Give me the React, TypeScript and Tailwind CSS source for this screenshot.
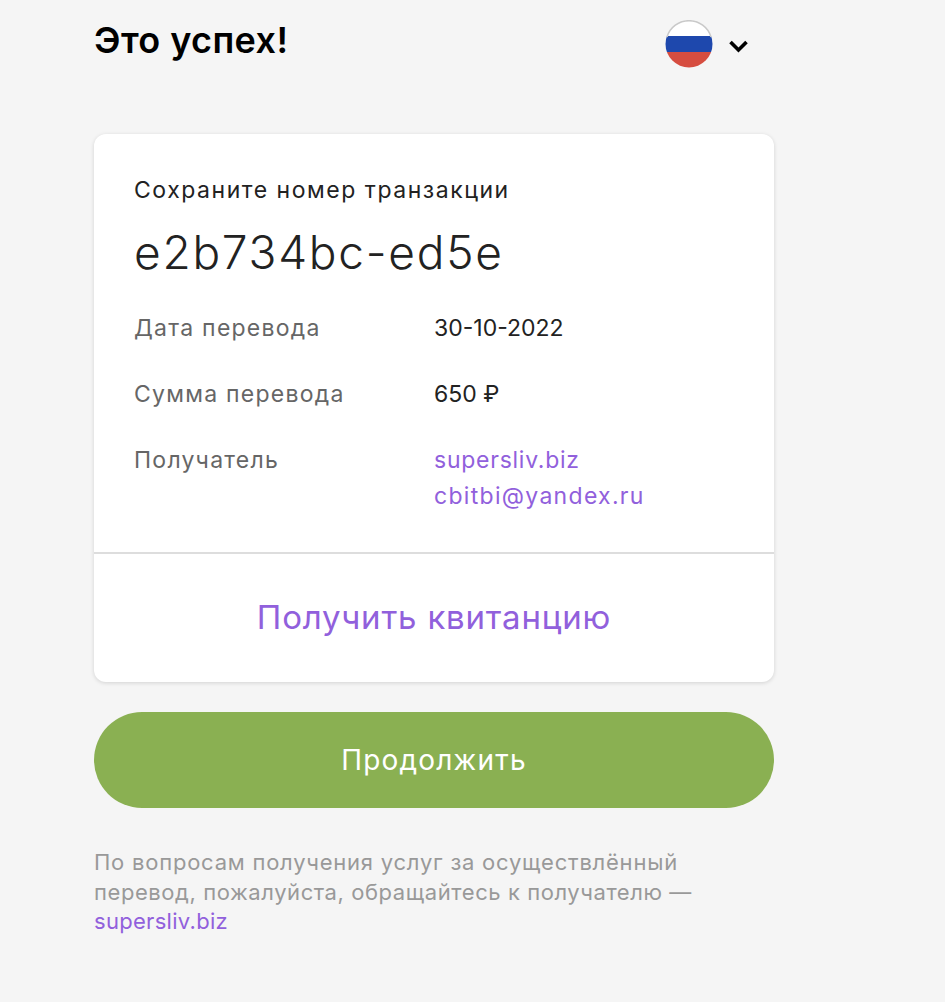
import React from 'react';

const Row: React.FC<{ label: string; children: React.ReactNode; className?: string }> = ({ label, children, className = '' }) => (
  <div className={`flex ${className}`}>
    <div className="w-[300px] text-[23px] leading-[36px] tracking-[1.25px] text-[#666666]">{label}</div>
    <div className="text-[23px] leading-[36px] text-[#222222]">{children}</div>
  </div>
);

const Flag = () => (
  <svg width="48" height="48" viewBox="0 0 48 48">
    <defs>
      <clipPath id="flag-circle">
        <circle cx="24" cy="24" r="23.5" />
      </clipPath>
    </defs>
    <g clipPath="url(#flag-circle)">
      <rect width="48" height="16" fill="#ffffff" />
      <rect y="16" width="48" height="16" fill="#1e48ad" />
      <rect y="32" width="48" height="16" fill="#d64d40" />
    </g>
    <path d="M2 17 A23 23 0 0 1 46 17" fill="none" stroke="#c9c9c9" strokeWidth="1.5" />
  </svg>
);

export default function App() {
  return (
    <div className="min-h-[1002px] w-[945px] bg-[#f5f5f5] pl-[94px] font-['Inter','Noto_Sans',sans-serif]">
      <div className="w-[680px]">
        <div className="flex h-[134px] items-start justify-between">
          <h1 className="pt-[17px] text-[36px] font-semibold leading-[46px] tracking-[0.4px] text-black">Это успех!</h1>
          <div className="mr-[24px] flex items-center pt-[20px]">
            <Flag />
            <svg className="ml-[15px] mt-[3px]" width="22" height="14" viewBox="0 0 22 14">
              <path d="M2.5 3 L10.5 11 L18.5 3" fill="none" stroke="#000000" strokeWidth="3.6" />
            </svg>
          </div>
        </div>

        <div className="h-[548px] rounded-[12px] bg-white shadow-[0_1px_4px_rgba(0,0,0,0.14)]">
          <div className="h-[420px] border-b-2 border-[#dddddd] px-[40px] pt-[38px]">
            <p className="text-[23px] leading-[36px] tracking-[1.53px] text-[#222222]">Сохраните номер транзакции</p>
            <p className="mt-[15px] text-[46px] font-light leading-[58px] tracking-[1.75px] text-[#222222]">e2b734bc-ed5e</p>
            <Row label="Дата перевода" className="mt-[29px]">30-10-2022</Row>
            <Row label="Сумма перевода" className="mt-[30px]">650 ₽</Row>
            <Row label="Получатель" className="mt-[30px]">
              <span className="block tracking-[0.75px] text-[#9160dc]">supersliv.biz</span>
              <span className="block tracking-[1.3px] text-[#9160dc]">cbitbi@yandex.ru</span>
            </Row>
          </div>
          <div className="flex h-[128px] items-center justify-center text-[33px] tracking-[0.8px] text-[#9160dc]">
            Получить квитанцию
          </div>
        </div>

        <button className="mt-[30px] flex h-[96px] w-full items-center justify-center rounded-[48px] bg-[#8ab052] text-[28px] tracking-[1.2px] text-white">
          Продолжить
        </button>

        <p className="mt-[40px] w-[620px] text-[22px] leading-[29.5px] text-[#999999]">
          <span className="tracking-[0.77px]">По вопросам получения услуг за осуществлённый</span>{' '}
          <span className="tracking-[0.57px]">перевод, пожалуйста, обращайтесь к получателю —</span>{' '}
          <span className="tracking-[0.3px] text-[#9160dc]">supersliv.biz</span>
        </p>
      </div>
    </div>
  );
}
